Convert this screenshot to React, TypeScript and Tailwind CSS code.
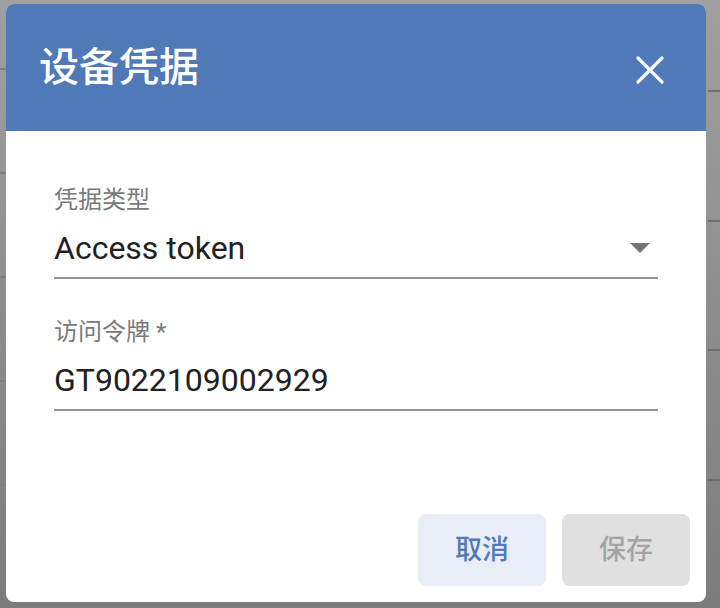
import { X } from 'lucide-react';

const font = { sans: "font-['Roboto','Noto_Sans_CJK_SC',sans-serif]" };

function Field({ label, value, select }: { label: string; value: string; select?: boolean }) {
  return (
    <div className="flex flex-col">
      <div className="text-[24px] leading-[32px] text-[#7a7a7a]">{label}</div>
      <div className="flex h-[63px] items-center justify-between border-b-2 border-[#949494] pt-[2px]">
        <span className="text-[32px] leading-[40px] text-[#212121]">{value}</span>
        {select && (
          <svg width="20" height="10" viewBox="0 0 20 10" className="mr-[8px]">
            <path d="M0 0h20L10 10z" fill="#757575" />
          </svg>
        )}
      </div>
    </div>
  );
}

function Backdrop() {
  return (
    <div className="flex h-full w-full">
      <div className="flex w-[180px] flex-col pt-[68px]">
        {[0, 1, 2, 3, 4].map((i) => (
          <div key={i} className="h-[104px] border-t-2 border-[#808080]" />
        ))}
      </div>
      <div className="flex flex-1 flex-col items-end pt-[90px]">
        {[0, 1, 2, 3].map((i) => (
          <div key={i} className="h-[132px] w-[12px] border-t-2 border-dashed border-[#6e6e6e]" />
        ))}
      </div>
    </div>
  );
}

export default function App() {
  return (
    <div className={`relative h-[608px] w-[720px] overflow-hidden bg-gradient-to-b from-[#a0a0a0] to-[#7c7c7c] ${font.sans}`}>
      <Backdrop />

      <div className="absolute left-[6px] top-[4px] flex h-[598px] w-[700px] flex-col overflow-hidden rounded-[8px] bg-white">
        <div className="flex h-[127px] items-center justify-between bg-[#5079b8] pl-[33px] pr-[32px]">
          <h2 className="text-[40px] font-medium leading-[48px] text-white">设备凭据</h2>
          <X size={48} strokeWidth={1.6} className="mt-[5px] text-white" />
        </div>

        <div className="flex flex-1 flex-col gap-[37px] px-[48px] pt-[53px]">
          <Field label="凭据类型" value="Access token" select />
          <Field label="访问令牌 *" value="GT9022109002929" />
        </div>

        <div className="flex justify-end gap-[16px] p-[16px]">
          <button className="h-[72px] w-[128px] rounded-[8px] bg-[#e8edf7] text-[27px] font-medium text-[#5079b8]">
            取消
          </button>
          <button className="h-[72px] w-[128px] rounded-[8px] bg-[#e0e0e0] text-[27px] font-medium text-[#a3a3a3]">
            保存
          </button>
        </div>
      </div>
    </div>
  );
}
